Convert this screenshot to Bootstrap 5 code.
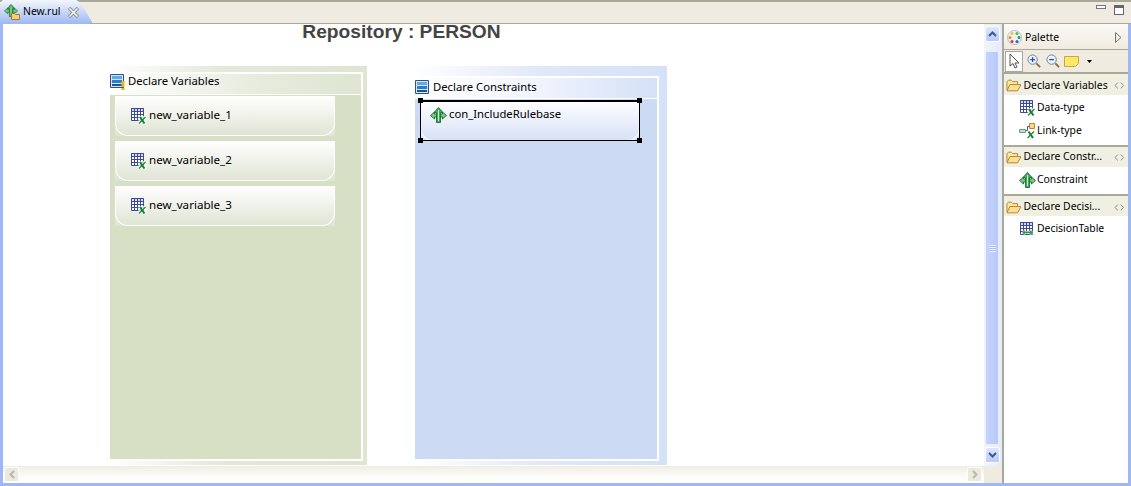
<!DOCTYPE html>
<html lang="en">
<head>
  <meta charset="UTF-8">
  <title>New.rul</title>
  <link rel="stylesheet" href="https://cdn.jsdelivr.net/npm/bootstrap@5.3.0/dist/css/bootstrap.min.css">
  <style>
    html, body { height: 100%; overflow: hidden; }
    body { font-family: "Noto Sans", "Liberation Sans", sans-serif; font-size: 10.4px; color: #000; background: #efebe0; }
    .app-frame { width: 1131px; height: 486px; }
    .tab-strip { height: 24px; background: #efebe0; border-top: 2px solid #aca899; position: relative; }
    .editor-tab { width: 92px; height: 24px; margin-top: -2px; gap: 2px; padding-left: 4px; background: linear-gradient(#f4f6fc, #9db8f2); clip-path: polygon(0 3px, 3px 0, 76px 0, 81px 3px, 92px 22px, 92px 24px, 0 24px); }
    .tab-close { margin-left: 6px; }
    .strip-line { position: absolute; left: 90px; right: 0; bottom: 0; height: 1px; background: #aca899; }
    .win-btns { position: absolute; right: 7px; top: 3px; gap: 8px; }
    .win-min { width: 10px; height: 4px; border: 1px solid #777; background: #fff; }
    .win-max { width: 10px; height: 10px; border: 1px solid #666; border-top-width: 3px; background: #fff; }
    .work-area { height: 462px; border: 3px solid #9db8f2; border-top: 0; background: #fff; }
    .left-pane { width: 999px; }
    .canvas-row { height: 442px; }
    .draw-area { width: 981px; height: 442px; position: relative; overflow: hidden; background: #fff; }
    .repo-title { position: absolute; left: 0; width: 797px; top: 0; text-align: center; font: bold 19.2px "Liberation Sans", sans-serif; color: #444; line-height: 15px; }
    .compartment { position: absolute; top: 42px; height: 399px; }
    .comp-green { left: 107px; width: 257px; background: linear-gradient(90deg, #fff 0, #e3e8d8 45%, #dfe5d2 100%); }
    .comp-blue { left: 412px; width: 252px; background: linear-gradient(90deg, #fff 0, #e0e8f8 50%, #d5e1f7 100%); }
    .comp-inner { position: absolute; left: 0; bottom: 4px; border-right: 2px solid #fff; border-bottom: 2px solid #fff; }
    .comp-green .comp-inner { top: 6px; width: 253px; background: #d7dfc5; }
    .comp-blue .comp-inner { top: 10px; width: 244px; background: #ccdaf4; }
    .comp-head { height: 23px; gap: 3px; border-top: 2px solid #fff; border-bottom: 1px solid #fff; padding: 0 0 2px 0; font-size: 11.3px; white-space: nowrap; }
    .comp-green .comp-head { background: linear-gradient(90deg, #fff, #e6ebdd 60%, #dfe5d2); padding-bottom: 6px; }
    .comp-blue .comp-head { background: linear-gradient(90deg, #fff, #f0f4fc 50%, #d5e1f7); }
    .node-list { padding: 1px 0 0 5px; gap: 5px; }
    .rule-node { width: 220px; height: 40px; gap: 2px; padding: 0 0 1px 14px; border-bottom: 1px solid #fff; border-left: 1px solid #fff; border-right: 1px solid #fff; border-radius: 0 0 13px 13px; font-size: 11.6px; }
    .node-wrap { width: 220px; }
    .comp-green .node-wrap { background: linear-gradient(#fff, #dfe4d3); }
    .comp-blue .node-wrap { background: linear-gradient(#fff, #d6e1f7); height: 41px; position: relative; }
    .comp-blue .rule-node { height: 41px; padding-bottom: 11px; padding-left: 9px; font-size: 11.3px; }
    .sel-box { position: absolute; inset: 0; border: 1px solid #000; border-top-width: 2px; }
    .sel-handle { position: absolute; width: 5px; height: 5px; background: #000; border: 1px solid #000; }
    .h-tl { left: -3px; top: -4px; } .h-tr { right: -3px; top: -4px; } .h-bl { left: -3px; bottom: -3px; } .h-br { right: -3px; bottom: -3px; }
    .v-scroll { width: 18px; background: linear-gradient(90deg, #f0f4fd, #e4ebfb); padding: 2px 3px 0 1px; height: 442px; }
    .scroll-btn { width: 15px; height: 16px; border: 1px solid #fff; border-radius: 2px; background: linear-gradient(#dfe7fb, #b8cafa); }
    .v-thumb { width: 14px; height: 394px; margin: 9px 0 2px; background: linear-gradient(90deg, #c5d3fb, #b8c9f9); border: 1px solid #e8eefc; border-radius: 2px; }
    .grip-mark { width: 7px; height: 7px; background: repeating-linear-gradient(#eef2fd 0 1px, #a9bdf0 1px 2px); }
    .h-scroll { height: 17px; }
    .h-track { width: 981px; background: linear-gradient(#efede3, #fdfcf9 60%, #fff); padding: 1px 2px 0 1px; }
    .h-btn { width: 15px; height: 15px; border: 1px solid #fff; border-radius: 2px; background: #ece9df; }
    .h-corner { width: 18px; background: #efebe0; }
    .palette-pane { width: 126px; border-left: 2px solid #aca899; background: #fff; }
    .pal-title { height: 26px; flex: none; gap: 3px; padding: 2px 6px 0 3px; background: linear-gradient(#fbfaf7, #efebe0); border-bottom: 1px solid #aca899; }
    .pal-tools { height: 24px; flex: none; gap: 4px; padding: 0 1px; background: #efebe0; border-bottom: 2px solid #aca899; }
    .tool-on { width: 18px; height: 21px; background: #fff; border: 1px solid #aca899; }
    .zoom-out { margin-left: 1px; }
    .drawer-head { height: 20px; flex: none; gap: 2px; padding: 0 3px 0 2px; background: #efefe2; white-space: nowrap; }
    .drawer-first { height: 21px; padding-top: 2px; }
    .drawer-last { padding-top: 2px; }
    .drawer-rule { border-top: 2px solid #aca899; background: #fff; flex: none; }
    .drawer-name { width: 92px; overflow: hidden; }
    .pal-item { height: 23px; gap: 1px; padding-left: 15px; white-space: nowrap; }
    .drawer-body { padding: 1px 0 3px; }
  </style>
</head>
<body>
  <svg width="0" height="0" class="position-absolute">
    <symbol id="i-table" viewBox="0 0 17 17">
      <path d="M1.500 1.500h12v12h-12z" fill="#fff" stroke="#3c4a96"/>
      <path d="M1.500 1.500h12v3h-12z" fill="#d5d8f3" stroke="#3c4a96"/>
      <path d="M1.500 7.500h12M1.500 10.500h12M4.500 1.500v12M7.500 1.500v12M10.500 1.500v12" stroke="#3c4a96" fill="none"/>
      <path d="M8.500 9h7.800v8H8.500z" fill="#fff" opacity=".75"/>
      <path d="M10 10l4.500 6.500" stroke="#14802a" stroke-width="2" fill="none"/>
      <path d="M15.500 10l-6.500 6.500" stroke="#14802a" stroke-width="1.100" fill="none"/>
    </symbol>
    <symbol id="i-arrows" viewBox="0 0 17 16">
      <path d="M.5 8.500L4.500 5v2h8V5l4 3.500-4 3.500v-2h-8v2z" fill="#7bc97c" stroke="#1b6e3a" stroke-width=".9" stroke-linejoin="round"/>
      <path d="M8.500.5L13 5.500h-2.500v10h-4v-10H4z" fill="#3fae55" stroke="#1b6e3a" stroke-width=".9" stroke-linejoin="round"/>
      <path d="M8.500 3v11" stroke="#c7ecc6" stroke-width="1"/>
    </symbol>
    <symbol id="i-folder" viewBox="0 0 16 13">
      <path d="M1 11V2.500L2.500 1h3L7 2.500h5v3" fill="#fbe6a8" stroke="#b5862b"/>
      <path d="M1 12l3-6.500h11.500L12 12z" fill="#fcdf95" stroke="#b5862b"/>
    </symbol>
    <symbol id="i-comp" viewBox="0 0 15 17">
      <path d="M.5 1.500h13v13H.5z" fill="#d8e4f8" stroke="#35507e"/>
      <path d="M2 3h10v3H2z" fill="#5aaee8"/>
      <path d="M2 7h10v3H2z" fill="#2b80c4"/>
      <path d="M2 11h10v2H2z" fill="#115c98"/>
    </symbol>
  </svg>

  <div class="app-frame d-flex flex-column">
    <div class="tab-strip d-flex">
      <div class="editor-tab d-flex align-items-center">
        <svg width="17" height="16" viewBox="0 0 17 16"><use href="#i-arrows" width="14" height="13"/><path d="M7.500 9.500h3l1 1h4v5h-8z" fill="#f7cf7a" stroke="#a57a2a"/></svg>
        <span>New.rul</span>
        <svg class="tab-close" width="11" height="11" viewBox="0 0 11 11"><path d="M1 1l9 9M10 1l-9 9" stroke="#8d948f" stroke-width="3.400"/><path d="M1.500 1.500l8 8M9.500 1.500l-8 8" stroke="#fff" stroke-width="1.400"/></svg>
      </div>
      <div class="strip-line"></div>
      <div class="win-btns d-flex"><div class="win-min"></div><div class="win-max"></div></div>
    </div>

    <div class="work-area d-flex">
      <div class="left-pane d-flex flex-column">
        <div class="canvas-row d-flex">
          <div class="draw-area">
            <div class="repo-title">Repository : PERSON</div>

            <div class="compartment comp-green">
              <div class="comp-inner">
                <div class="comp-head d-flex align-items-center">
                  <svg width="15" height="17" viewBox="0 0 15 17"><use href="#i-comp"/><path d="M11.500 8h3v6h-3zM11.500 15h3v2h-3z" fill="#f3b413"/></svg>
                  <span>Declare Variables</span>
                </div>
                <div class="node-list d-flex flex-column">
                  <div class="node-wrap"><div class="rule-node d-flex align-items-center"><svg width="17" height="17"><use href="#i-table"/></svg><span>new_variable_1</span></div></div>
                  <div class="node-wrap"><div class="rule-node d-flex align-items-center"><svg width="17" height="17"><use href="#i-table"/></svg><span>new_variable_2</span></div></div>
                  <div class="node-wrap"><div class="rule-node d-flex align-items-center"><svg width="17" height="17"><use href="#i-table"/></svg><span>new_variable_3</span></div></div>
                </div>
              </div>
            </div>

            <div class="compartment comp-blue">
              <div class="comp-inner">
                <div class="comp-head d-flex align-items-center">
                  <svg width="15" height="17" viewBox="0 0 15 17"><use href="#i-comp"/></svg>
                  <span>Declare Constraints</span>
                </div>
                <div class="node-list d-flex flex-column">
                  <div class="node-wrap">
                    <div class="rule-node d-flex align-items-center"><svg width="17" height="16"><use href="#i-arrows"/></svg><span>con_IncludeRulebase</span></div>
                    <div class="sel-box">
                      <div class="sel-handle h-tl"></div><div class="sel-handle h-tr"></div>
                      <div class="sel-handle h-bl"></div><div class="sel-handle h-br"></div>
                    </div>
                  </div>
                </div>
              </div>
            </div>
          </div>

          <div class="v-scroll d-flex flex-column align-items-center">
            <div class="scroll-btn d-flex align-items-center justify-content-center"><svg width="9" height="6" viewBox="0 0 9 6"><path d="M1 5l3.500-3.500L8 5" fill="none" stroke="#3d5a8c" stroke-width="2"/></svg></div>
            <div class="v-thumb d-flex align-items-center justify-content-center"><div class="grip-mark"></div></div>
            <div class="scroll-btn d-flex align-items-center justify-content-center"><svg width="9" height="6" viewBox="0 0 9 6"><path d="M1 1l3.500 3.500L8 1" fill="none" stroke="#3d5a8c" stroke-width="2"/></svg></div>
          </div>
        </div>

        <div class="h-scroll d-flex">
          <div class="h-track d-flex justify-content-between">
            <div class="h-btn d-flex align-items-center justify-content-center"><svg width="6" height="9" viewBox="0 0 6 9"><path d="M5 1L1.500 4.500 5 8" fill="none" stroke="#b9b8ae" stroke-width="2"/></svg></div>
            <div class="h-btn d-flex align-items-center justify-content-center"><svg width="6" height="9" viewBox="0 0 6 9"><path d="M1 1l3.500 3.500L1 8" fill="none" stroke="#b9b8ae" stroke-width="2"/></svg></div>
          </div>
          <div class="h-corner"></div>
        </div>
      </div>

      <div class="palette-pane d-flex flex-column">
        <div class="pal-title d-flex align-items-center">
          <svg width="15" height="15" viewBox="0 0 15 15"><circle cx="7.500" cy="7.500" r="7" fill="#eef0f8" stroke="#b7bccb"/><circle cx="5" cy="3.500" r="1.500" fill="#e9c92f"/><circle cx="10" cy="3.500" r="1.500" fill="#59b54a"/><circle cx="3" cy="7.500" r="1.500" fill="#ef8a1d"/><circle cx="12" cy="7.500" r="1.500" fill="#2e9a42"/><circle cx="5" cy="11.500" r="1.500" fill="#d9362b"/><circle cx="10" cy="11.500" r="1.500" fill="#2d62d0"/></svg>
          <span>Palette</span>
          <svg class="ms-auto" width="7" height="11" viewBox="0 0 7 11"><path d="M.5.500l5.500 5-5.500 5z" fill="#efebe0" stroke="#777"/></svg>
        </div>
        <div class="pal-tools d-flex align-items-center">
          <div class="tool-on d-flex align-items-center justify-content-center"><svg width="11" height="16" viewBox="0 0 11 16"><path d="M1 1v12l3-2.500 2 4.500 2-1-2-4h4z" fill="#fff" stroke="#555"/></svg></div>
          <svg width="14" height="14" viewBox="0 0 15 15"><circle cx="6" cy="6" r="5" fill="#eef3fb" stroke="#6d7d92"/><path d="M3.500 6h5M6 3.500v5" stroke="#1f4fb8" stroke-width="1.400"/><path d="M10 10l4 4" stroke="#8a6a3a" stroke-width="2"/></svg>
          <svg class="zoom-out" width="14" height="14" viewBox="0 0 15 15"><circle cx="6" cy="6" r="5" fill="#eef3fb" stroke="#6d7d92"/><path d="M3.500 6h5" stroke="#1f4fb8" stroke-width="1.400"/><path d="M10 10l4 4" stroke="#8a6a3a" stroke-width="2"/></svg>
          <svg width="15" height="11" viewBox="0 0 15 11"><path d="M.5.500h14v7l-3 3H.5z" fill="#fde968" stroke="#c8a73c"/></svg>
          <svg class="ms-1" width="5" height="3" viewBox="0 0 5 3"><path d="M0 0h5L2.500 3z" fill="#000"/></svg>
        </div>

        <div class="drawer-head drawer-first d-flex align-items-center">
          <svg width="16" height="13"><use href="#i-folder"/></svg>
          <span class="drawer-name">Declare Variables</span>
          <svg class="ms-auto" width="11" height="7" viewBox="0 0 11 7"><path d="M4 .5L1 3.500l3 3M7 .5l3 3-3 3" fill="none" stroke="#888"/></svg>
        </div>
        <div class="drawer-body">
          <div class="pal-item d-flex align-items-center"><svg width="17" height="17"><use href="#i-table"/></svg><span>Data-type</span></div>
          <div class="pal-item d-flex align-items-center"><svg width="17" height="16" viewBox="0 0 17 16"><path d="M.5 6.500h6v3h-6z" fill="#bfe0c0" stroke="#6f9f78"/><path d="M10.500.5h5v5h-5z" fill="#fbd87e" stroke="#b98b2c"/><path d="M6.500 7.500h2v-4h2" fill="none" stroke="#2f63b8"/><path d="M9.500 8.500l4.500 6.500" stroke="#14802a" stroke-width="2" fill="none"/><path d="M15 8.500l-6.500 6.500" stroke="#14802a" stroke-width="1.100" fill="none"/></svg><span>Link-type</span></div>
        </div>

        <div class="drawer-rule"></div>
        <div class="drawer-head d-flex align-items-center">
          <svg width="16" height="13"><use href="#i-folder"/></svg>
          <span class="drawer-name">Declare Constr...</span>
          <svg class="ms-auto" width="11" height="7" viewBox="0 0 11 7"><path d="M4 .5L1 3.500l3 3M7 .5l3 3-3 3" fill="none" stroke="#888"/></svg>
        </div>
        <div class="drawer-body">
          <div class="pal-item d-flex align-items-center"><svg width="17" height="16"><use href="#i-arrows"/></svg><span>Constraint</span></div>
        </div>

        <div class="drawer-rule"></div>
        <div class="drawer-head drawer-last d-flex align-items-center">
          <svg width="16" height="13"><use href="#i-folder"/></svg>
          <span class="drawer-name">Declare Decisi...</span>
          <svg class="ms-auto" width="11" height="7" viewBox="0 0 11 7"><path d="M4 .5L1 3.500l3 3M7 .5l3 3-3 3" fill="none" stroke="#888"/></svg>
        </div>
        <div class="drawer-body">
          <div class="pal-item d-flex align-items-center"><svg width="17" height="16" viewBox="0 0 17 16"><path d="M1.500 1.500h12v12h-12z" fill="#fff" stroke="#3c4a96"/><path d="M1.500 1.500h12v3h-12z" fill="#d5d8f3" stroke="#3c4a96"/><path d="M1.500 7.500h12M1.500 10.500h12M4.500 1.500v12M7.500 1.500v12M10.500 1.500v12" stroke="#3c4a96" fill="none"/><path d="M3 11.500l3-3v2h5v-2l3.500 3-3.500 3v-2H6v2z" fill="#2e9a42" stroke="#fff" stroke-width=".5"/></svg><span>DecisionTable</span></div>
        </div>
      </div>
    </div>
  </div>

  <script src="https://cdn.jsdelivr.net/npm/bootstrap@5.3.0/dist/js/bootstrap.bundle.min.js"></script>
</body>
</html>
